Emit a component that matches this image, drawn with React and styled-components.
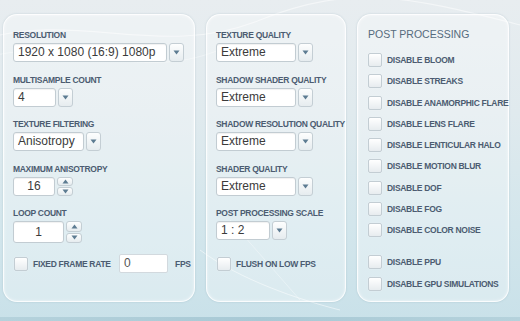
import styled, { createGlobalStyle } from "styled-components";

const GlobalStyle = createGlobalStyle`
  html, body {
    margin: 0;
    padding: 0;
    background: #dfe9ed;
  }
  * {
    box-sizing: border-box;
  }
`;

const leftFields = [
  { label: "RESOLUTION", type: "select", value: "1920 x 1080 (16:9) 1080p", width: 154 },
  { label: "MULTISAMPLE COUNT", type: "select", value: "4", width: 43 },
  { label: "TEXTURE FILTERING", type: "select", value: "Anisotropy", width: 71 },
  { label: "MAXIMUM ANISOTROPY", type: "spin", value: "16", width: 42 },
  { label: "LOOP COUNT", type: "spin", value: "1", width: 51, tall: true },
];

const midFields = [
  { label: "TEXTURE QUALITY", value: "Extreme", width: 80 },
  { label: "SHADOW SHADER QUALITY", value: "Extreme", width: 80 },
  { label: "SHADOW RESOLUTION QUALITY", value: "Extreme", width: 80 },
  { label: "SHADER QUALITY", value: "Extreme", width: 80 },
  { label: "POST PROCESSING SCALE", value: "1 : 2", width: 54 },
];

const postOptions = [
  ["DISABLE BLOOM", "DISABLE STREAKS", "DISABLE ANAMORPHIC FLARE", "DISABLE LENS FLARE",
    "DISABLE LENTICULAR HALO", "DISABLE MOTION BLUR", "DISABLE DOF", "DISABLE FOG",
    "DISABLE COLOR NOISE"],
  ["DISABLE PPU", "DISABLE GPU SIMULATIONS"],
];

const Arrow = ({ up }) => (
  <svg width="7" height="5" viewBox="0 0 7 5">
    <path d={up ? "M0.5 4.5 L3.5 0.5 L6.5 4.5 Z" : "M0.5 0.5 L6.5 0.5 L3.5 4.5 Z"} fill="#5d7c92" />
  </svg>
);

const Select = ({ value, width }) => (
  <Combo>
    <Box width={width}>{value}</Box>
    <DropButton>
      <Arrow />
    </DropButton>
  </Combo>
);

const Spinner = ({ value, width, tall }) => (
  <Combo>
    <Box width={width} $center $tall={tall}>{value}</Box>
    <SpinCol>
      <SpinButton><Arrow up /></SpinButton>
      <SpinButton><Arrow /></SpinButton>
    </SpinCol>
  </Combo>
);

const Field = ({ label, type, ...rest }) => (
  <FieldWrap>
    <Label>{label}</Label>
    {type === "spin" ? <Spinner {...rest} /> : <Select {...rest} />}
  </FieldWrap>
);

const Check = ({ children }) => (
  <CheckRow>
    <CheckBox />
    <Label>{children}</Label>
  </CheckRow>
);

const Swooshes = () => (
  <Deco width="520" height="321" viewBox="0 0 520 321">
    <path d="M-20 40 C 80 10, 160 60, 260 20 S 420 0, 540 30" stroke="#fff" strokeOpacity="0.5" strokeWidth="1.2" fill="none" />
    <path d="M-20 60 C 60 30, 140 90, 230 45" stroke="#fff" strokeOpacity="0.35" strokeWidth="1" fill="none" />
    <path d="M200 250 C 240 280, 300 300, 340 310" stroke="#fff" strokeOpacity="0.5" strokeWidth="1" fill="none" />
    <path d="M230 220 L 300 300" stroke="#fff" strokeOpacity="0.35" strokeWidth="1" fill="none" />
  </Deco>
);

const App = () => {
  return (
    <>
      <GlobalStyle />
      <Screen>
        <Swooshes />
        <Columns>
          <Panel>
            <Stack>
              {leftFields.map((f) => (
                <Field key={f.label} {...f} />
              ))}
            </Stack>
            <FpsRow>
              <Check>FIXED FRAME RATE</Check>
              <FpsInput>0</FpsInput>
              <Label>FPS</Label>
            </FpsRow>
          </Panel>
          <Panel>
            <Stack>
              {midFields.map((f) => (
                <Field key={f.label} {...f} />
              ))}
            </Stack>
            <FlushRow>
              <Check>FLUSH ON LOW FPS</Check>
            </FlushRow>
          </Panel>
          <Panel $post>
            <Title>POST PROCESSING</Title>
            {postOptions.map((group, i) => (
              <CheckGroup key={i}>
                {group.map((o) => (
                  <Check key={o}>{o}</Check>
                ))}
              </CheckGroup>
            ))}
          </Panel>
        </Columns>
        <Footer />
      </Screen>
    </>
  );
};

export default App;

const Screen = styled.div`
  position: relative;
  width: 520px;
  height: 321px;
  overflow: hidden;
  display: flex;
  flex-direction: column;
  background: linear-gradient(180deg, #e8edf0 0%, #e0eaee 35%, #d3e6ec 70%, #c9e1e9 100%);
`;

const Deco = styled.svg`
  position: absolute;
  left: 0;
  top: 0;
  pointer-events: none;
`;

const Columns = styled.div`
  position: relative;
  flex: 1;
  display: grid;
  grid-template-columns: 192px 140px 152px;
  column-gap: 11px;
  padding: 14px 0 0 3px;
`;

const Panel = styled.div`
  height: 288px;
  border-radius: 14px;
  border: 1px solid rgba(255, 255, 255, 0.85);
  background: rgba(255, 255, 255, 0.3);
  box-shadow: 0 0 2px rgba(110, 145, 160, 0.35), inset 0 0 3px rgba(255, 255, 255, 0.6);
  padding: ${({ $post }) => ($post ? "12px 0 0 10px" : "15px 0 0 9px")};
  display: flex;
  flex-direction: column;
`;

const Stack = styled.div`
  display: flex;
  flex-direction: column;
  gap: 12.5px;
`;

const FieldWrap = styled.div`
  display: flex;
  flex-direction: column;
  gap: 3px;
`;

const Label = styled.span`
  font-family: "Liberation Sans", Arial, sans-serif;
  font-weight: bold;
  font-size: 8.5px;
  letter-spacing: -0.3px;
  line-height: 10px;
  color: #4c5c71;
  white-space: nowrap;
`;

const Title = styled.div`
  font-family: "Liberation Sans", Arial, sans-serif;
  font-size: 10.5px;
  line-height: 14px;
  color: #566b7d;
  margin-bottom: 5px;
`;

const Combo = styled.div`
  display: flex;
  gap: 2px;
  align-items: stretch;
`;

const Box = styled.div`
  width: ${({ width }) => width}px;
  height: ${({ $tall }) => ($tall ? 22 : 19)}px;
  background: #fff;
  border: 1px solid #c2ccd2;
  border-radius: 3px;
  box-shadow: inset 0 1px 1px rgba(0, 0, 0, 0.06);
  font-family: "Liberation Sans", Arial, sans-serif;
  font-size: 12px;
  line-height: 17px;
  color: #3b3b3b;
  padding: ${({ $tall }) => ($tall ? "2px 4px" : "0 4px")};
  text-align: ${({ $center }) => ($center ? "center" : "left")};
  white-space: nowrap;
  overflow: hidden;
`;

const DropButton = styled.div`
  width: 15px;
  border: 1px solid #c4ced4;
  border-radius: 3px;
  background: linear-gradient(180deg, #fdfefe 0%, #e6ecef 100%);
  display: flex;
  align-items: center;
  justify-content: center;
`;

const SpinCol = styled.div`
  width: 16px;
  display: flex;
  flex-direction: column;
  gap: 1px;
`;

const SpinButton = styled.div`
  flex: 1;
  border: 1px solid #c4ced4;
  border-radius: 3px;
  background: linear-gradient(180deg, #fdfefe 0%, #e6ecef 100%);
  display: flex;
  align-items: center;
  justify-content: center;
`;

const CheckRow = styled.div`
  display: flex;
  align-items: center;
  gap: 5px;
  height: 14px;
`;

const CheckBox = styled.div`
  flex-shrink: 0;
  width: 14px;
  height: 14px;
  border: 1px solid #c3cdd3;
  border-radius: 2px;
  background: linear-gradient(180deg, #ffffff 0%, #e7ecef 100%);
  box-shadow: 0 0 1px rgba(255, 255, 255, 0.9);
`;

const FpsRow = styled.div`
  display: grid;
  grid-template-columns: 105px 49px auto;
  align-items: center;
  margin-top: 11px;
  padding-left: 1px;
  & > ${Label} {
    margin-left: 7px;
  }
`;

const FpsInput = styled.div`
  height: 19px;
  background: #fff;
  border: 1px solid #d2d9de;
  border-radius: 2px;
  font-family: "Liberation Sans", Arial, sans-serif;
  font-size: 12px;
  line-height: 17px;
  color: #555;
  padding: 0 4px;
`;

const FlushRow = styled.div`
  margin-top: 17px;
  padding-left: 1px;
`;

const CheckGroup = styled.div`
  display: flex;
  flex-direction: column;
  gap: 7.3px;
  margin-top: 7px;
  & + & {
    margin-top: 18px;
  }
`;

const Footer = styled.div`
  height: 4px;
  background: linear-gradient(90deg, #b5d2dc, #a8c9d5 50%, #b5d2dc);
`;
